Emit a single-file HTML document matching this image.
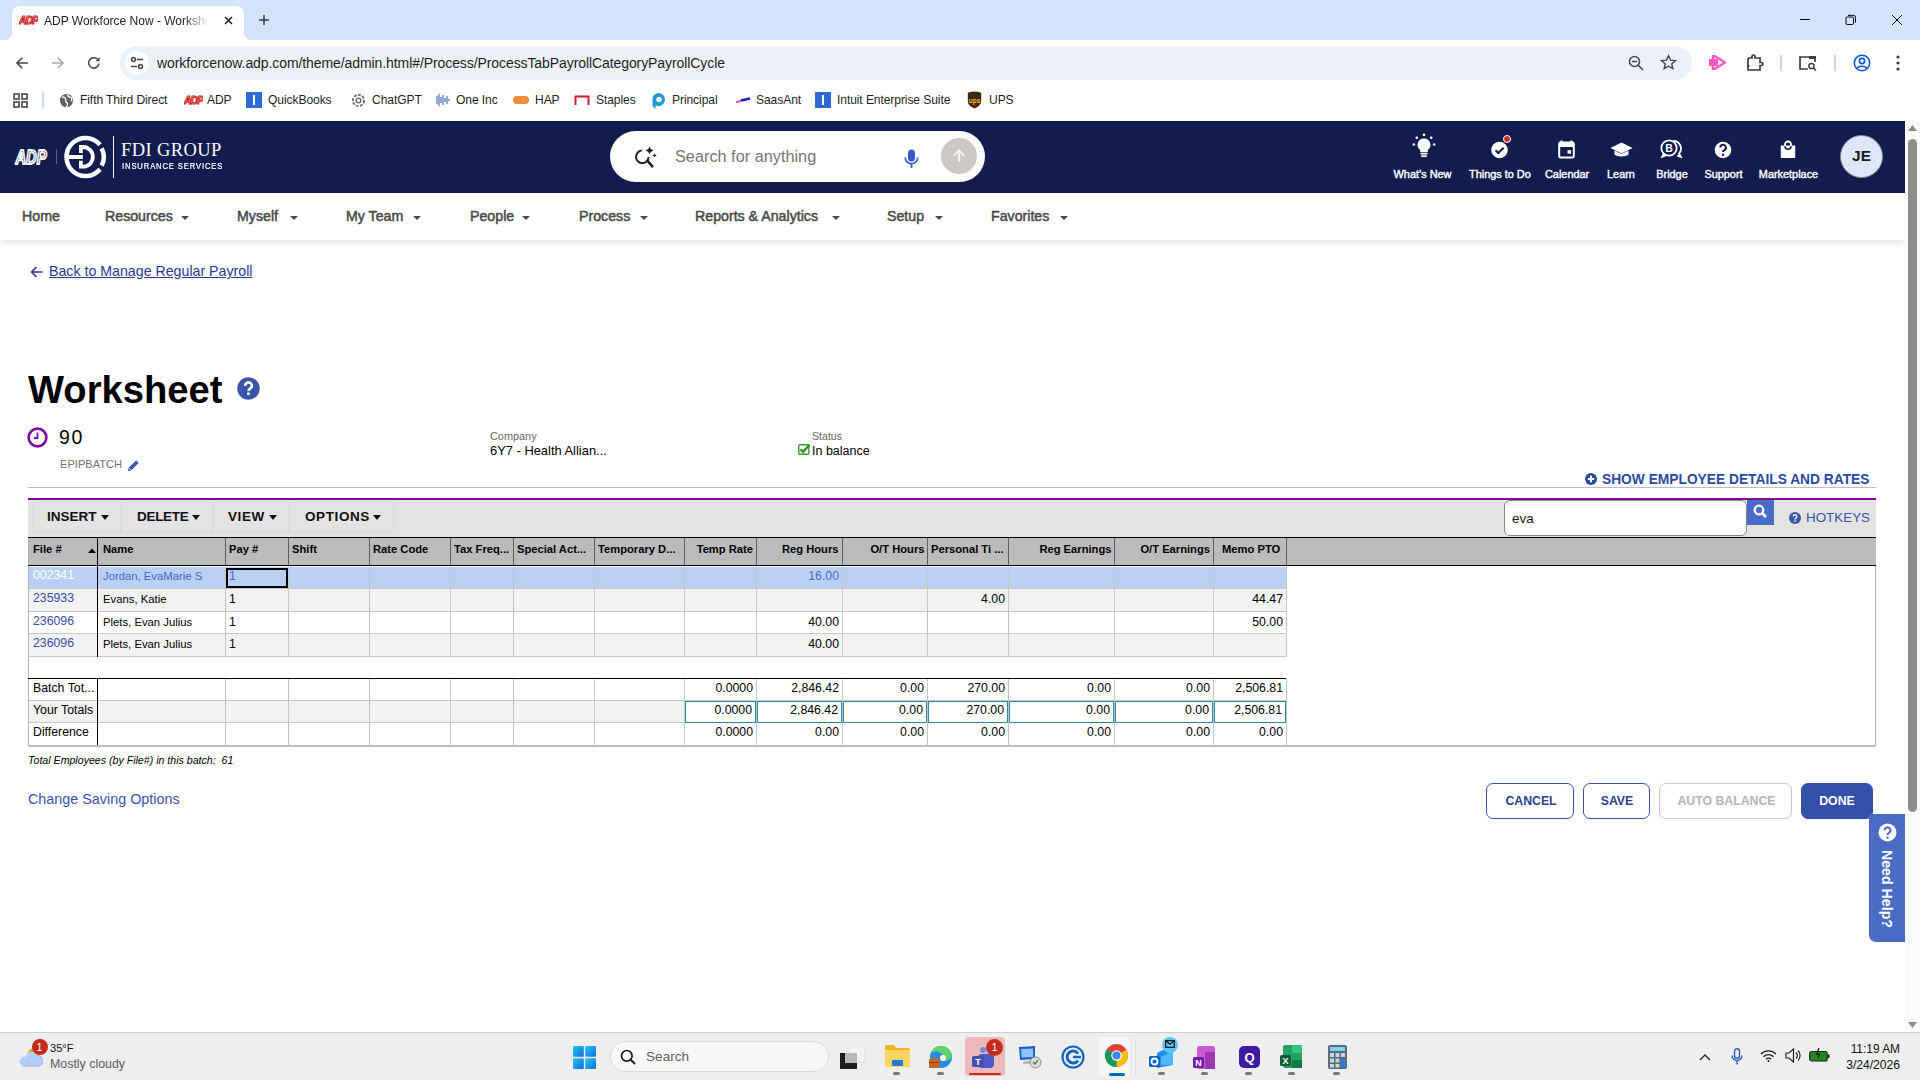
<!DOCTYPE html>
<html><head><meta charset="utf-8">
<style>
*{box-sizing:border-box;margin:0;padding:0}
html,body{width:1920px;height:1080px;overflow:hidden;background:#fff;font-family:"Liberation Sans",sans-serif;color:#000}
.a{position:absolute;white-space:nowrap}
#tabbar{position:absolute;left:0;top:0;width:1920px;height:40px;background:#d3e3fd}
#toolbar{position:absolute;left:0;top:40px;width:1920px;height:45px;background:#fff}
#bmbar{position:absolute;left:0;top:85px;width:1920px;height:36px;background:#fff}
#hdr{position:absolute;left:0;top:121px;width:1905px;height:72px;background:#131c4f}
#nav{position:absolute;left:0;top:193px;width:1905px;height:47px;background:#fff;box-shadow:0 2px 6px rgba(0,0,0,.13)}
#scroll{position:absolute;left:1905px;top:121px;width:15px;height:911px;background:#fafafa}
#task{position:absolute;left:0;top:1032px;width:1920px;height:48px;background:#eeeeee;border-top:1px solid #cfcfcf}
.bm{top:7px;font-size:12.1px;color:#1f1f1f;line-height:16px;letter-spacing:-0.1px}
.hl{top:47px;font-size:10.9px;font-weight:normal;-webkit-text-stroke:0.4px #fff;color:#fff;line-height:13px;text-align:center}
.nv{top:15px;font-size:14.2px;font-weight:normal;-webkit-text-stroke:0.5px #4a4a4a;color:#4a4a4a;line-height:17px}
.car{top:23px;width:0;height:0;border-left:4px solid transparent;border-right:4px solid transparent;border-top:4px solid #4a4a4a}
.tb{top:501px;height:32px;border:1px solid #d5dde0}
.tbt{top:509px;font-size:13.5px;font-weight:bold;color:#111;line-height:16px}
.dcar{top:515px;width:0;height:0;border-left:4.5px solid transparent;border-right:4.5px solid transparent;border-top:5px solid #111}
.th{top:543px;font-size:11.2px;font-weight:bold;color:#000;line-height:13px}
.td{font-size:12.3px;color:#000;line-height:14px}
.nm{font-size:11.3px}
.btn{top:783px;height:36px;border:1.5px solid;border-radius:7px}
.btnt{top:794px;font-size:12.3px;font-weight:bold;line-height:15px;text-align:center}
.dot{top:39px;width:7px;height:3px;border-radius:2px;background:#7a7a7a}
</style></head><body>
<div id="tabbar">
 <div class="a" style="left:12px;top:6px;width:232px;height:34px;background:#fff;border-radius:8px 8px 0 0"></div>
 <div class="a" style="left:4px;top:32px;width:8px;height:8px;background:radial-gradient(circle at 0 0,#d3e3fd 8px,#fff 8.5px)"></div>
 <div class="a" style="left:244px;top:32px;width:8px;height:8px;background:radial-gradient(circle at 100% 0,#d3e3fd 8px,#fff 8.5px)"></div>
 <svg class="a" style="left:19px;top:14px" width="19" height="11" viewBox="0 0 19 11"><text x="9.5" y="9.5" font-size="10.5" font-weight="bold" font-style="italic" fill="none" stroke="#d0271d" stroke-width="1.1" text-anchor="middle" font-family="Liberation Sans" letter-spacing="-1">ADP</text></svg>
 <div class="a" style="left:44px;top:14px;font-size:12px;color:#1f1f1f;letter-spacing:0px;width:165px;overflow:hidden;-webkit-mask-image:linear-gradient(90deg,#000 85%,transparent)">ADP Workforce Now - Worksheet</div>
 <svg class="a" style="left:224px;top:16px" width="9" height="9" viewBox="0 0 9 9"><path d="M1 1L8 8M8 1L1 8" stroke="#1f1f1f" stroke-width="1.5"/></svg>
 <svg class="a" style="left:259px;top:15px" width="10" height="10" viewBox="0 0 10 10"><path d="M5 0V10M0 5H10" stroke="#3c3c3c" stroke-width="1.5"/></svg>
 <div class="a" style="left:1800px;top:19px;width:10px;height:1px;background:#000"></div>
 <svg class="a" style="left:1845px;top:14px" width="12" height="12" viewBox="0 0 12 12"><rect x="1" y="3" width="7.5" height="7.5" rx="1.2" fill="none" stroke="#000" stroke-width="1"/><path d="M3 1.3h5.5a2 2 0 0 1 2 2V8.7" fill="none" stroke="#000" stroke-width="1"/></svg>
 <svg class="a" style="left:1891px;top:14px" width="12" height="12" viewBox="0 0 12 12"><path d="M1 1L11 11M11 1L1 11" stroke="#000" stroke-width="1"/></svg>
</div>
<div id="toolbar">
 <svg class="a" style="left:15px;top:16px" width="14" height="14" viewBox="0 0 14 14"><path d="M13 7H2.2M7.2 1.8L2 7L7.2 12.2" fill="none" stroke="#474747" stroke-width="1.6"/></svg>
 <svg class="a" style="left:51px;top:16px" width="14" height="14" viewBox="0 0 14 14"><path d="M1 7H11.8M6.8 1.8L12 7L6.8 12.2" fill="none" stroke="#a8a8a8" stroke-width="1.6"/></svg>
 <svg class="a" style="left:87px;top:16px" width="14" height="14" viewBox="0 0 14 14"><path d="M12 7.5a5.2 5.2 0 1 1-1.5-4.3" fill="none" stroke="#474747" stroke-width="1.6"/><path d="M12.6 1V5.2H8.4z" fill="#474747"/></svg>
 <div class="a" style="left:120px;top:6px;width:1572px;height:34px;border-radius:17px;background:#ecf1f9"></div>
 <div class="a" style="left:125px;top:11px;width:24px;height:24px;border-radius:12px;background:#fff"></div>
 <svg class="a" style="left:130px;top:16px" width="14" height="14" viewBox="0 0 14 14"><circle cx="3.5" cy="3.5" r="2" fill="none" stroke="#474747" stroke-width="1.5"/><path d="M7 3.5H13" stroke="#474747" stroke-width="1.5"/><circle cx="10.5" cy="10.5" r="2" fill="none" stroke="#474747" stroke-width="1.5"/><path d="M1 10.5H7" stroke="#474747" stroke-width="1.5"/></svg>
 <div class="a" style="left:157px;top:15px;font-size:14px;letter-spacing:-0.085px;color:#1f1f1f;line-height:16px">workforcenow.adp.com/theme/admin.html#/Process/ProcessTabPayrollCategoryPayrollCycle</div>
 <svg class="a" style="left:1628px;top:15px" width="16" height="16" viewBox="0 0 16 16"><circle cx="6.5" cy="6.5" r="5" fill="none" stroke="#474747" stroke-width="1.6"/><path d="M10 10L15 15M4 6.5H9" stroke="#474747" stroke-width="1.6"/></svg>
 <svg class="a" style="left:1660px;top:14px" width="17" height="17" viewBox="0 0 24 24"><path d="M12 2.5l2.9 6.2 6.8.7-5.1 4.6 1.5 6.7L12 17.3l-6.1 3.4 1.5-6.7L2.3 9.4l6.8-.7z" fill="none" stroke="#474747" stroke-width="2"/></svg>
 <svg class="a" style="left:1709px;top:15px" width="17" height="15" viewBox="0 0 17 15"><path d="M0 4H4V11H0z" fill="#ff5bbd"/><path d="M4 0L16 7.5L4 15z" fill="none" stroke="#ff5bbd" stroke-width="2.5"/><path d="M4 4H9V11H4z" fill="#ff5bbd"/></svg>
 <svg class="a" style="left:1746px;top:14px" width="18" height="18" viewBox="0 0 18 18"><path d="M2 4H6V2.5a1.5 1.5 0 0 1 3 0V4H14V8.5h1.5a1.5 1.5 0 0 1 0 3H14V16H2V12h1.5" fill="none" stroke="#3c3c3c" stroke-width="1.7"/><path d="M2 4V12" stroke="#3c3c3c" stroke-width="1.7"/></svg>
 <div class="a" style="left:1780px;top:15px;width:2px;height:16px;background:#c2d5f5"></div>
 <svg class="a" style="left:1799px;top:15px" width="18" height="16" viewBox="0 0 18 16"><path d="M9 14H1V2H16V7" fill="none" stroke="#3c3c3c" stroke-width="1.7"/><rect x="10" y="1" width="7" height="3" fill="#3c3c3c"/><circle cx="12.5" cy="11" r="2.6" fill="none" stroke="#3c3c3c" stroke-width="1.5"/><path d="M14.5 13L17 15.5" stroke="#3c3c3c" stroke-width="1.6"/></svg>
 <div class="a" style="left:1834px;top:15px;width:2px;height:16px;background:#c2d5f5"></div>
 <svg class="a" style="left:1853px;top:14px" width="18" height="18" viewBox="0 0 18 18"><circle cx="9" cy="9" r="7.7" fill="none" stroke="#0b57d0" stroke-width="1.6"/><circle cx="9" cy="7" r="2.6" fill="none" stroke="#0b57d0" stroke-width="1.6"/><path d="M4 14a6 4 0 0 1 10 0" fill="none" stroke="#0b57d0" stroke-width="1.6"/></svg>
 <svg class="a" style="left:1895px;top:15px" width="6" height="16" viewBox="0 0 6 16"><circle cx="3" cy="2" r="1.6" fill="#3c3c3c"/><circle cx="3" cy="8" r="1.6" fill="#3c3c3c"/><circle cx="3" cy="14" r="1.6" fill="#3c3c3c"/></svg>
</div>

<div id="bmbar">
 <svg class="a" style="left:13px;top:8px" width="15" height="15" viewBox="0 0 15 15"><g fill="none" stroke="#474747" stroke-width="1.6"><rect x="1" y="1" width="5" height="5"/><rect x="9" y="1" width="5" height="5"/><rect x="1" y="9" width="5" height="5"/><rect x="9" y="9" width="5" height="5"/></g></svg>
 <div class="a" style="left:42px;top:7px;width:2px;height:16px;background:#c7d9f7"></div>
 <svg class="a" style="left:59px;top:8px" width="15" height="15" viewBox="0 0 16 16"><circle cx="8" cy="8" r="7" fill="#5f6368"/><path d="M3 4c2 1 3 0 4 2s-1 3 1 4 1 3 0 5M9 1.5c0 2 1 2.5 3 3s2 2 1 4" fill="none" stroke="#fff" stroke-width="1.4"/></svg>
 <div class="a bm" style="left:80px">Fifth Third Direct</div>
 <svg class="a" style="left:184px;top:9px" width="19" height="11" viewBox="0 0 19 11"><text x="9.5" y="9.5" font-size="10.5" font-weight="bold" font-style="italic" fill="none" stroke="#d0271d" stroke-width="1.1" text-anchor="middle" font-family="Liberation Sans" letter-spacing="-1">ADP</text></svg>
 <div class="a bm" style="left:207px">ADP</div>
 <div class="a" style="left:246px;top:7px;width:16px;height:16px;background:#2e6ad6"><div style="position:absolute;left:7px;top:3px;width:2px;height:10px;background:#fff"></div></div>
 <div class="a bm" style="left:268px">QuickBooks</div>
 <svg class="a" style="left:351px;top:8px" width="15" height="15" viewBox="0 0 16 16"><circle cx="8" cy="8" r="6" fill="none" stroke="#6b6b6b" stroke-width="2" stroke-dasharray="3 1.5"/><circle cx="8" cy="8" r="2.5" fill="none" stroke="#6b6b6b" stroke-width="1.5"/></svg>
 <div class="a bm" style="left:372px">ChatGPT</div>
 <svg class="a" style="left:434px;top:7px" width="16" height="16" viewBox="0 0 16 16"><g stroke="#5b7fb8" stroke-width="1.3"><path d="M1 8V8M3 4V12M5 2V14M7 5V11M9 3V13M11 6V10M13 4V12M15 7V9"/></g></svg>
 <div class="a bm" style="left:456px">One Inc</div>
 <div class="a" style="left:513px;top:11px;width:16px;height:8px;border-radius:4px;background:#f08a3c"></div>
 <div class="a bm" style="left:535px">HAP</div>
 <svg class="a" style="left:574px;top:10px" width="16" height="10" viewBox="0 0 16 10"><path d="M1.5 10V1.5H14.5V10" fill="none" stroke="#cc1f2f" stroke-width="2"/></svg>
 <div class="a bm" style="left:596px">Staples</div>
 <svg class="a" style="left:651px;top:7px" width="15" height="17" viewBox="0 0 15 17"><path d="M7.5 1a6.5 6.5 0 1 1-3 12.3V17L1.5 14V7.5A6 6 0 0 1 7.5 1z" fill="#1a9ad6"/><circle cx="8" cy="7.5" r="2.7" fill="#fff"/></svg>
 <div class="a bm" style="left:672px">Principal</div>
 <svg class="a" style="left:735px;top:9px" width="16" height="12" viewBox="0 0 16 12"><path d="M1 8L6 7" stroke="#ff3fb4" stroke-width="2"/><path d="M6 6.5L15 4.5" stroke="#1b1bd6" stroke-width="2.6"/></svg>
 <div class="a bm" style="left:756px">SaasAnt</div>
 <div class="a" style="left:815px;top:7px;width:16px;height:16px;background:#2e6ad6"><div style="position:absolute;left:7px;top:3px;width:2px;height:10px;background:#fff"></div></div>
 <div class="a bm" style="left:837px">Intuit Enterprise Suite</div>
 <svg class="a" style="left:967px;top:6px" width="15" height="18" viewBox="0 0 15 18"><path d="M7.5 0.5C4 0.5 1.5 1.3 0.8 2V10c0 4 4 6.5 6.7 7.5 2.7-1 6.7-3.5 6.7-7.5V2C13.5 1.3 11 0.5 7.5 0.5z" fill="#3b2a18"/><text x="7.5" y="11.5" font-size="6.5" font-weight="bold" fill="#f5b400" text-anchor="middle" font-family="Liberation Sans">ups</text></svg>
 <div class="a bm" style="left:989px">UPS</div>
</div>

<div id="hdr">
 <svg class="a" style="left:14px;top:27px" width="36" height="18" viewBox="0 0 36 18"><text x="1.5" y="16" font-size="20" font-weight="bold" font-style="italic" fill="#131c4f" stroke="#fff" stroke-width="1.9" stroke-linejoin="round" textLength="31" lengthAdjust="spacingAndGlyphs" font-family="Liberation Sans">ADP</text></svg>
 <div class="a" style="left:56px;top:28px;width:1px;height:15px;background:#5a6090"></div>
 <svg class="a" style="left:64px;top:14px" width="44" height="45" viewBox="0 0 44 45"><path d="M36.05 9.79A19 19 0 1 0 36.05 34.21" fill="none" stroke="#fff" stroke-width="4.5"/><path d="M37.61 13.43A18.25 18.25 0 0 1 37.61 30.57" fill="none" stroke="#fff" stroke-width="4.5"/><path d="M16.9 17.9V12H19A9.85 9.85 0 0 1 19 31.7H16.9V25.8" fill="none" stroke="#fff" stroke-width="3.8"/><path d="M4 22H18.8" stroke="#fff" stroke-width="4"/></svg>
 <div class="a" style="left:113px;top:15px;width:1px;height:42px;background:#fff"></div>
 <div class="a" style="left:121px;top:19px;font-family:'Liberation Serif',serif;font-size:18.5px;color:#fff;line-height:20px;letter-spacing:0.4px">FDI GROUP</div>
 <div class="a" style="left:122px;top:40px;font-size:7.6px;color:#fff;line-height:9px;letter-spacing:0.9px;font-weight:normal;-webkit-text-stroke:0.2px #fff;transform:scaleY(1.15);transform-origin:0 0">INSURANCE SERVICES</div>
 <div class="a" style="left:610px;top:10px;width:375px;height:51px;border-radius:26px;background:#fff"></div>
 <svg class="a" style="left:634px;top:23px" width="24" height="24" viewBox="0 0 24 24"><path d="M7.75 6.62A6.3 6.3 0 1 0 14.6 12.9" fill="none" stroke="#222" stroke-width="2"/><path d="M13.4 16.6L18.3 22.4" stroke="#222" stroke-width="2.5" stroke-linecap="round"/><path d="M15.6 2.1Q16.2 5.8 19.9 6.4Q16.2 7 15.6 10.7Q15 7 11.3 6.4Q15 5.8 15.6 2.1Z" fill="#222"/><path d="M20.6 9.3Q20.9 11.1 22.7 11.4Q20.9 11.7 20.6 13.5Q20.3 11.7 18.5 11.4Q20.3 11.1 20.6 9.3Z" fill="#222"/></svg>
 <div class="a" style="left:675px;top:25px;font-size:16.3px;color:#767676;line-height:20px">Search for anything</div>
 <svg class="a" style="left:904px;top:28px" width="15" height="19" viewBox="0 0 15 19"><rect x="4" y="0.5" width="7" height="12" rx="3.5" fill="#3a58c0"/><path d="M1.3 8.5a6.2 6.2 0 0 0 12.4 0" fill="none" stroke="#3a58c0" stroke-width="1.8"/><path d="M7.5 14.5V19" stroke="#3a58c0" stroke-width="1.8"/></svg>
 <div class="a" style="left:941px;top:17px;width:36px;height:36px;border-radius:18px;background:#cdc8c4"></div>
 <svg class="a" style="left:952px;top:28px" width="14" height="14" viewBox="0 0 14 14"><path d="M7 13V1.5M1.8 6.7L7 1.5L12.2 6.7" fill="none" stroke="#fff" stroke-width="1.6"/></svg>
 <!-- right icons -->
 <svg class="a" style="left:1412px;top:12px" width="24" height="25" viewBox="0 0 24 25"><g fill="#fff"><circle cx="12" cy="1.8" r="1.4"/><circle cx="4.8" cy="4.8" r="1.3"/><circle cx="19.2" cy="4.8" r="1.3"/><circle cx="1.8" cy="11.5" r="1.3"/><circle cx="22.2" cy="11.5" r="1.3"/><path d="M12 5.5a6.3 6.3 0 0 0-3.8 11.4V19h7.6v-2.1A6.3 6.3 0 0 0 12 5.5z"/><rect x="8.4" y="19.8" width="7.2" height="1.6" rx=".5"/><rect x="9" y="22.2" width="6" height="1.8" rx=".8"/></g></svg>
 <div class="a hl" style="left:1393px;width:59px">What’s New</div>
 <svg class="a" style="left:1490px;top:19px" width="20" height="19" viewBox="0 0 20 19"><circle cx="9.5" cy="10" r="8.3" fill="#fff"/><path d="M5.5 10.2l2.8 2.8 5.3-5.3" fill="none" stroke="#131c4f" stroke-width="2"/></svg>
 <div class="a" style="left:1503px;top:14px;width:8px;height:8px;border-radius:4px;background:#d0271d;border:1px solid #fff"></div>
 <div class="a hl" style="left:1469px;width:61px">Things to Do</div>
 <svg class="a" style="left:1558px;top:19px" width="17" height="19" viewBox="0 0 17 19"><path d="M3.5 0.5V3M13.5 0.5V3" stroke="#fff" stroke-width="2"/><rect x="1.2" y="2.5" width="14.6" height="15" rx="1.3" fill="none" stroke="#fff" stroke-width="2"/><rect x="1.2" y="2.5" width="14.6" height="4.5" fill="#fff"/><rect x="9.5" y="10.2" width="3.5" height="3.5" fill="#fff"/></svg>
 <div class="a hl" style="left:1545px;width:44px">Calendar</div>
 <svg class="a" style="left:1610px;top:21px" width="23" height="16" viewBox="0 0 23 16"><path d="M11.5 0.5L22.5 6L11.5 11.5L0.5 6z" fill="#fff"/><path d="M4.5 8.5V12.5c2 2.5 12 2.5 14 0V8.5L11.5 12z" fill="#fff"/></svg>
 <div class="a hl" style="left:1606px;width:30px">Learn</div>
 <svg class="a" style="left:1660px;top:18px" width="23" height="19" viewBox="0 0 23 19"><path d="M13 2a7.5 7.5 0 0 1 6 12.5l2 3.5-4-1.5" fill="none" stroke="#fff" stroke-width="1.8"/><circle cx="9" cy="9" r="7.7" fill="#131c4f" stroke="#fff" stroke-width="1.8"/><path d="M3.5 14.5L1.5 18.5 6 16.5" fill="#fff" stroke="#fff" stroke-width="1.2"/><text x="9" y="12.8" font-size="10.5" font-weight="bold" fill="#fff" text-anchor="middle" font-family="Liberation Sans">B</text></svg>
 <div class="a hl" style="left:1656px;width:32px">Bridge</div>
 <svg class="a" style="left:1714px;top:20px" width="18" height="18" viewBox="0 0 18 18"><circle cx="9" cy="9" r="8.3" fill="#fff"/><path d="M6.3 6.6a2.8 2.8 0 1 1 4 2.5c-.9.5-1.3 1-1.3 2" fill="none" stroke="#131c4f" stroke-width="2"/><circle cx="9" cy="13.8" r="1.2" fill="#131c4f"/></svg>
 <div class="a hl" style="left:1704px;width:39px">Support</div>
 <svg class="a" style="left:1780px;top:19px" width="16" height="19" viewBox="0 0 16 19"><path d="M5 6V4.5a3 3 0 0 1 6 0V6" fill="none" stroke="#fff" stroke-width="1.8"/><path d="M0.8 5.5h14.4v12.5H0.8z" fill="#fff"/><path d="M5 6.2a3 3 0 0 0 6 0" fill="none" stroke="#131c4f" stroke-width="1.6"/></svg>
 <div class="a hl" style="left:1758px;width:61px">Marketplace</div>
 <div class="a" style="left:1840px;top:14px;width:43px;height:43px;border-radius:22px;background:#dde7f8;border:1px solid #8d8a88"></div>
 <div class="a" style="left:1840px;top:25px;width:43px;text-align:center;font-size:15.5px;font-weight:bold;color:#1b1b1b;line-height:20px">JE</div>
</div>
<div id="nav">
 <div class="a nv" style="left:22px">Home</div>
 <div class="a nv" style="left:105px">Resources</div><div class="a car" style="left:181px"></div>
 <div class="a nv" style="left:237px">Myself</div><div class="a car" style="left:290px"></div>
 <div class="a nv" style="left:346px">My Team</div><div class="a car" style="left:413px"></div>
 <div class="a nv" style="left:470px">People</div><div class="a car" style="left:522px"></div>
 <div class="a nv" style="left:579px">Process</div><div class="a car" style="left:640px"></div>
 <div class="a nv" style="left:695px">Reports &amp; Analytics</div><div class="a car" style="left:832px"></div>
 <div class="a nv" style="left:887px">Setup</div><div class="a car" style="left:935px"></div>
 <div class="a nv" style="left:991px">Favorites</div><div class="a car" style="left:1060px"></div>
</div>

<svg class="a" style="left:30px;top:266px" width="13" height="12" viewBox="0 0 13 12"><path d="M12.5 6H1.5M6.5 1L1.5 6L6.5 11" fill="none" stroke="#2b3a8f" stroke-width="1.6"/></svg>
<div class="a" style="left:49px;top:263px;font-size:14.2px;color:#2b3a8f;text-decoration:underline;text-underline-offset:1px;line-height:16px">Back to Manage Regular Payroll</div>
<div class="a" style="left:28px;top:368px;font-size:38.2px;font-weight:bold;color:#000;line-height:44px">Worksheet</div>
<svg class="a" style="left:237px;top:377px" width="23" height="23" viewBox="0 0 23 23"><circle cx="11.5" cy="11.5" r="11.2" fill="#3a54a8"/><path d="M8.2 8.8a3.3 3.3 0 1 1 4.8 2.9c-1 .55-1.5 1.1-1.5 2.4" fill="none" stroke="#fff" stroke-width="2.5"/><rect x="10.2" y="15.5" width="2.6" height="2.6" fill="#fff"/></svg>
<svg class="a" style="left:27px;top:427px" width="21" height="21" viewBox="0 0 21 21"><circle cx="10.5" cy="10.5" r="8.9" fill="none" stroke="#7d0ba0" stroke-width="2.6"/><path d="M10.5 5.5V11H7" fill="none" stroke="#7d0ba0" stroke-width="1.8"/></svg>
<div class="a" style="left:59px;top:426px;font-size:19.5px;color:#000;line-height:22px;letter-spacing:1.6px">90</div>
<div class="a" style="left:60px;top:458px;font-size:11.1px;color:#707070;line-height:13px">EPIPBATCH</div>
<svg class="a" style="left:127px;top:459px" width="13" height="13" viewBox="0 0 13 13"><path d="M1 12l.6-3.2L9 1.4l2.6 2.6-7.4 7.4z" fill="#3a54b8"/><path d="M2.2 9.3l1.5 1.5" stroke="#fff" stroke-width="0.8"/></svg>
<div class="a" style="left:490px;top:430px;font-size:10.9px;color:#666;line-height:12px">Company</div>
<div class="a" style="left:490px;top:443px;font-size:12.9px;color:#000;line-height:15px">6Y7 - Health Allian...</div>
<div class="a" style="left:812px;top:430px;font-size:10.6px;color:#666;line-height:12px">Status</div>
<svg class="a" style="left:798px;top:444px" width="12" height="11" viewBox="0 0 12 11"><rect x="0.8" y="0.8" width="10" height="9.5" rx="1" fill="none" stroke="#3f9a2f" stroke-width="1.4"/><path d="M2.5 5.2l2.5 2.7L11.5 0.8" fill="none" stroke="#2f8a1f" stroke-width="2.2"/></svg>
<div class="a" style="left:812px;top:444px;font-size:12.5px;color:#000;line-height:15px">In balance</div>
<svg class="a" style="left:1585px;top:473px" width="12" height="12" viewBox="0 0 12 12"><circle cx="6" cy="6" r="6" fill="#2b4aa0"/><path d="M6 2.8V9.2M2.8 6H9.2" stroke="#fff" stroke-width="2"/></svg>
<div class="a" style="left:1602px;top:472px;font-size:13.78px;font-weight:bold;color:#2b4aa0;line-height:16px">SHOW EMPLOYEE DETAILS AND RATES</div>
<div class="a" style="left:28px;top:487px;width:1848px;height:1px;background:#bdbdbd"></div>
<div class="a" style="left:28px;top:498px;width:1848px;height:2px;background:#7e0aa0"></div>
<div class="a" style="left:28px;top:500px;width:1848px;height:37px;background:#e3e3e3"></div>
<div class="a tb" style="left:32px;width:89px"></div>
<div class="a tb" style="left:121px;width:92px"></div>
<div class="a tb" style="left:213px;width:76px"></div>
<div class="a tb" style="left:289px;width:105px"></div>
<div class="a tbt" style="left:47px">INSERT</div><div class="a dcar" style="left:101px"></div>
<div class="a tbt" style="left:137px;letter-spacing:-0.3px">DELETE</div><div class="a dcar" style="left:192px"></div>
<div class="a tbt" style="left:228px;letter-spacing:0.6px">VIEW</div><div class="a dcar" style="left:269px"></div>
<div class="a tbt" style="left:305px;letter-spacing:0.6px">OPTIONS</div><div class="a dcar" style="left:373px"></div>
<div class="a" style="left:1504px;top:500px;width:243px;height:36px;border:1px solid #8a8580;border-radius:6px;background:#fff"></div>
<div class="a" style="left:1512px;top:511px;font-size:13.5px;color:#1b1b1b;line-height:16px">eva</div>
<div class="a" style="left:1747px;top:500px;width:27px;height:25px;background:#4a6cc8"></div>
<svg class="a" style="left:1753px;top:504px" width="15" height="15" viewBox="0 0 15 15"><circle cx="6" cy="6" r="4.3" fill="none" stroke="#fff" stroke-width="2.2"/><path d="M9 9L13 13" stroke="#fff" stroke-width="2.6"/></svg>
<svg class="a" style="left:1789px;top:512px" width="12" height="12" viewBox="0 0 12 12"><circle cx="6" cy="6" r="6" fill="#3a54a8"/><path d="M4.2 4.6a1.8 1.8 0 1 1 2.6 1.6c-.5.3-.8.6-.8 1.3" fill="none" stroke="#fff" stroke-width="1.4"/><rect x="5.3" y="8.3" width="1.5" height="1.5" fill="#fff"/></svg>
<div class="a" style="left:1806px;top:510px;font-size:13.4px;color:#3a54a8;line-height:16px">HOTKEYS</div>

<div class="a" style="left:28px;top:537px;width:1848px;height:210px;border-left:1px solid #b4b4b4;border-right:1px solid #b4b4b4"></div>
<div class="a" style="left:28px;top:537px;width:1848px;height:1px;background:#000"></div>
<div class="a" style="left:29px;top:538px;width:1847px;height:27px;background:#bbbbbb"></div>
<div class="a" style="left:28px;top:565px;width:1848px;height:1px;background:#000"></div>
<div class="a" style="left:225px;top:538px;width:1px;height:27px;background:#5e5e5e"></div>
<div class="a" style="left:288px;top:538px;width:1px;height:27px;background:#5e5e5e"></div>
<div class="a" style="left:369px;top:538px;width:1px;height:27px;background:#5e5e5e"></div>
<div class="a" style="left:450px;top:538px;width:1px;height:27px;background:#5e5e5e"></div>
<div class="a" style="left:513px;top:538px;width:1px;height:27px;background:#5e5e5e"></div>
<div class="a" style="left:594px;top:538px;width:1px;height:27px;background:#5e5e5e"></div>
<div class="a" style="left:684px;top:538px;width:1px;height:27px;background:#5e5e5e"></div>
<div class="a" style="left:756px;top:538px;width:1px;height:27px;background:#5e5e5e"></div>
<div class="a" style="left:842px;top:538px;width:1px;height:27px;background:#5e5e5e"></div>
<div class="a" style="left:927px;top:538px;width:1px;height:27px;background:#5e5e5e"></div>
<div class="a" style="left:1008px;top:538px;width:1px;height:27px;background:#5e5e5e"></div>
<div class="a" style="left:1114px;top:538px;width:1px;height:27px;background:#5e5e5e"></div>
<div class="a" style="left:1213px;top:538px;width:1px;height:27px;background:#5e5e5e"></div>
<div class="a" style="left:1286px;top:538px;width:1px;height:27px;background:#5e5e5e"></div>
<div class="a" style="left:97px;top:538px;width:1px;height:27px;background:#000"></div>
<div class="a th" style="left:33px">File #</div>
<div class="a th" style="left:103px">Name</div>
<div class="a th" style="left:229px">Pay #</div>
<div class="a th" style="left:292px">Shift</div>
<div class="a th" style="left:373px">Rate Code</div>
<div class="a th" style="left:454px">Tax Freq...</div>
<div class="a th" style="left:517px">Special Act...</div>
<div class="a th" style="left:598px">Temporary D...</div>
<div class="a th" style="left:553px;width:200px;text-align:right">Temp Rate</div>
<div class="a th" style="left:638.5px;width:200px;text-align:right">Reg Hours</div>
<div class="a th" style="left:724.5px;width:200px;text-align:right">O/T Hours</div>
<div class="a th" style="left:931px">Personal Ti ...</div>
<div class="a th" style="left:911.5px;width:200px;text-align:right">Reg Earnings</div>
<div class="a th" style="left:1010px;width:200px;text-align:right">O/T Earnings</div>
<div class="a th" style="left:1222px">Memo PTO</div>
<svg class="a" style="left:88px;top:548px" width="8" height="5" viewBox="0 0 8 5"><path d="M0 5L4 0.5L8 5z" fill="#000"/></svg>
<div class="a" style="left:29px;top:567px;width:1257px;height:21px;background:#bacff4"></div>
<div class="a" style="left:29px;top:588px;width:1258px;height:1px;background:#c6c6c6"></div>
<div class="a" style="left:29px;top:589px;width:1257px;height:22px;background:#f2f2f2"></div>
<div class="a" style="left:29px;top:611px;width:1258px;height:1px;background:#c6c6c6"></div>
<div class="a" style="left:29px;top:612px;width:1257px;height:21px;background:#ffffff"></div>
<div class="a" style="left:29px;top:633px;width:1258px;height:1px;background:#c6c6c6"></div>
<div class="a" style="left:29px;top:634px;width:1257px;height:22px;background:#f2f2f2"></div>
<div class="a" style="left:29px;top:656px;width:1258px;height:1px;background:#c6c6c6"></div>
<div class="a" style="left:225px;top:566px;width:1px;height:91px;background:#c6c6c6"></div>
<div class="a" style="left:288px;top:566px;width:1px;height:91px;background:#c6c6c6"></div>
<div class="a" style="left:369px;top:566px;width:1px;height:91px;background:#c6c6c6"></div>
<div class="a" style="left:450px;top:566px;width:1px;height:91px;background:#c6c6c6"></div>
<div class="a" style="left:513px;top:566px;width:1px;height:91px;background:#c6c6c6"></div>
<div class="a" style="left:594px;top:566px;width:1px;height:91px;background:#c6c6c6"></div>
<div class="a" style="left:684px;top:566px;width:1px;height:91px;background:#c6c6c6"></div>
<div class="a" style="left:756px;top:566px;width:1px;height:91px;background:#c6c6c6"></div>
<div class="a" style="left:842px;top:566px;width:1px;height:91px;background:#c6c6c6"></div>
<div class="a" style="left:927px;top:566px;width:1px;height:91px;background:#c6c6c6"></div>
<div class="a" style="left:1008px;top:566px;width:1px;height:91px;background:#c6c6c6"></div>
<div class="a" style="left:1114px;top:566px;width:1px;height:91px;background:#c6c6c6"></div>
<div class="a" style="left:1213px;top:566px;width:1px;height:91px;background:#c6c6c6"></div>
<div class="a" style="left:1286px;top:566px;width:1px;height:91px;background:#c6c6c6"></div>
<div class="a" style="left:97px;top:566px;width:1px;height:91px;background:#000"></div>
<div class="a" style="left:96.5px;top:566px;width:1px;height:91px;background:rgba(0,0,0,.35)"></div>
<div class="a" style="left:96.5px;top:538px;width:1px;height:27px;background:rgba(0,0,0,.35)"></div>
<div class="a td" style="left:33px;top:568px;color:#ffffff">002341</div>
<div class="a td nm" style="left:103px;top:569px;color:#4a66c4">Jordan, EvaMarie S</div>
<div class="a td" style="left:229px;top:569px;color:#4a66c4">1</div>
<div class="a td" style="left:739px;width:100px;text-align:right;top:569px;color:#4a66c4">16.00</div>
<div class="a td" style="left:33px;top:591px;color:#3a4ea6">235933</div>
<div class="a td nm" style="left:103px;top:592px;color:#000">Evans, Katie</div>
<div class="a td" style="left:229px;top:592px;color:#000">1</div>
<div class="a td" style="left:905px;width:100px;text-align:right;top:592px;color:#000">4.00</div>
<div class="a td" style="left:1183px;width:100px;text-align:right;top:592px;color:#000">44.47</div>
<div class="a td" style="left:33px;top:614px;color:#3a4ea6">236096</div>
<div class="a td nm" style="left:103px;top:615px;color:#000">Plets, Evan Julius</div>
<div class="a td" style="left:229px;top:615px;color:#000">1</div>
<div class="a td" style="left:739px;width:100px;text-align:right;top:615px;color:#000">40.00</div>
<div class="a td" style="left:1183px;width:100px;text-align:right;top:615px;color:#000">50.00</div>
<div class="a td" style="left:33px;top:636px;color:#3a4ea6">236096</div>
<div class="a td nm" style="left:103px;top:637px;color:#000">Plets, Evan Julius</div>
<div class="a td" style="left:229px;top:637px;color:#000">1</div>
<div class="a td" style="left:739px;width:100px;text-align:right;top:637px;color:#000">40.00</div>
<div class="a" style="left:226px;top:568px;width:62px;height:20px;border:2px solid #000"></div>
<div class="a" style="left:28px;top:678px;width:1258px;height:1px;background:#000"></div>
<div class="a" style="left:29px;top:679px;width:1257px;height:21px;background:#fff"></div>
<div class="a" style="left:29px;top:700px;width:1258px;height:1px;background:#c6c6c6"></div>
<div class="a" style="left:29px;top:701px;width:1257px;height:21px;background:#f2f2f2"></div>
<div class="a" style="left:29px;top:722px;width:1258px;height:1px;background:#c6c6c6"></div>
<div class="a" style="left:29px;top:723px;width:1257px;height:22px;background:#fff"></div>
<div class="a" style="left:28px;top:745px;width:1848px;height:2px;background:#bdbdbd"></div>
<div class="a" style="left:225px;top:679px;width:1px;height:66px;background:#c6c6c6"></div>
<div class="a" style="left:288px;top:679px;width:1px;height:66px;background:#c6c6c6"></div>
<div class="a" style="left:369px;top:679px;width:1px;height:66px;background:#c6c6c6"></div>
<div class="a" style="left:450px;top:679px;width:1px;height:66px;background:#c6c6c6"></div>
<div class="a" style="left:513px;top:679px;width:1px;height:66px;background:#c6c6c6"></div>
<div class="a" style="left:594px;top:679px;width:1px;height:66px;background:#c6c6c6"></div>
<div class="a" style="left:684px;top:679px;width:1px;height:66px;background:#c6c6c6"></div>
<div class="a" style="left:756px;top:679px;width:1px;height:66px;background:#c6c6c6"></div>
<div class="a" style="left:842px;top:679px;width:1px;height:66px;background:#c6c6c6"></div>
<div class="a" style="left:927px;top:679px;width:1px;height:66px;background:#c6c6c6"></div>
<div class="a" style="left:1008px;top:679px;width:1px;height:66px;background:#c6c6c6"></div>
<div class="a" style="left:1114px;top:679px;width:1px;height:66px;background:#c6c6c6"></div>
<div class="a" style="left:1213px;top:679px;width:1px;height:66px;background:#c6c6c6"></div>
<div class="a" style="left:1286px;top:679px;width:1px;height:66px;background:#c6c6c6"></div>
<div class="a" style="left:97px;top:679px;width:1px;height:66px;background:#000"></div>
<div class="a" style="left:96.5px;top:679px;width:1px;height:66px;background:rgba(0,0,0,.35)"></div>
<div class="a td" style="left:33px;top:681px">Batch Tot...</div>
<div class="a td" style="left:653px;width:100px;text-align:right;top:681px">0.0000</div>
<div class="a td" style="left:739px;width:100px;text-align:right;top:681px">2,846.42</div>
<div class="a td" style="left:824px;width:100px;text-align:right;top:681px">0.00</div>
<div class="a td" style="left:905px;width:100px;text-align:right;top:681px">270.00</div>
<div class="a td" style="left:1011px;width:100px;text-align:right;top:681px">0.00</div>
<div class="a td" style="left:1110px;width:100px;text-align:right;top:681px">0.00</div>
<div class="a td" style="left:1183px;width:100px;text-align:right;top:681px">2,506.81</div>
<div class="a td" style="left:33px;top:703px">Your Totals</div>
<div class="a" style="left:685px;top:701px;width:71px;height:22px;border:1.5px solid #2f87a3;background:#fff"></div>
<div class="a td" style="left:652px;width:100px;text-align:right;top:703px">0.0000</div>
<div class="a" style="left:757px;top:701px;width:85px;height:22px;border:1.5px solid #2f87a3;background:#fff"></div>
<div class="a td" style="left:738px;width:100px;text-align:right;top:703px">2,846.42</div>
<div class="a" style="left:843px;top:701px;width:84px;height:22px;border:1.5px solid #2f87a3;background:#fff"></div>
<div class="a td" style="left:823px;width:100px;text-align:right;top:703px">0.00</div>
<div class="a" style="left:928px;top:701px;width:80px;height:22px;border:1.5px solid #2f87a3;background:#fff"></div>
<div class="a td" style="left:904px;width:100px;text-align:right;top:703px">270.00</div>
<div class="a" style="left:1009px;top:701px;width:105px;height:22px;border:1.5px solid #2f87a3;background:#fff"></div>
<div class="a td" style="left:1010px;width:100px;text-align:right;top:703px">0.00</div>
<div class="a" style="left:1115px;top:701px;width:98px;height:22px;border:1.5px solid #2f87a3;background:#fff"></div>
<div class="a td" style="left:1109px;width:100px;text-align:right;top:703px">0.00</div>
<div class="a" style="left:1214px;top:701px;width:72px;height:22px;border:1.5px solid #2f87a3;background:#fff"></div>
<div class="a td" style="left:1182px;width:100px;text-align:right;top:703px">2,506.81</div>
<div class="a td" style="left:33px;top:725px">Difference</div>
<div class="a td" style="left:653px;width:100px;text-align:right;top:725px">0.0000</div>
<div class="a td" style="left:739px;width:100px;text-align:right;top:725px">0.00</div>
<div class="a td" style="left:824px;width:100px;text-align:right;top:725px">0.00</div>
<div class="a td" style="left:905px;width:100px;text-align:right;top:725px">0.00</div>
<div class="a td" style="left:1011px;width:100px;text-align:right;top:725px">0.00</div>
<div class="a td" style="left:1110px;width:100px;text-align:right;top:725px">0.00</div>
<div class="a td" style="left:1183px;width:100px;text-align:right;top:725px">0.00</div>
<div class="a" style="left:28px;top:754px;font-size:10.62px;font-style:italic;color:#000;line-height:12px">Total Employees (by File#) in this batch:&nbsp; 61</div>
<div class="a" style="left:28px;top:791px;font-size:14.36px;color:#3a50b0;line-height:17px">Change Saving Options</div>
<div class="a btn" style="left:1486px;width:88px;border-color:#3a52a8"></div>
<div class="a btnt" style="left:1486px;width:88px;color:#2b3f91;padding-left:2px">CANCEL</div>
<div class="a btn" style="left:1583px;width:67px;border-color:#3a52a8"></div>
<div class="a btnt" style="left:1583px;width:67px;color:#2b3f91;padding-left:1px">SAVE</div>
<div class="a btn" style="left:1659px;width:133px;border-color:#c9c9c9"></div>
<div class="a btnt" style="left:1659px;width:133px;color:#b5b5b5;padding-left:2px">AUTO BALANCE</div>
<div class="a btn" style="left:1801px;width:72px;border-color:#3450a8;background:#3450a8"></div>
<div class="a btnt" style="left:1801px;width:72px;color:#fff">DONE</div>
<div class="a" style="left:1869px;top:814px;width:36px;height:128px;background:#4a6cc4;border-radius:0 0 0 7px"></div>
<svg class="a" style="left:1878px;top:823px" width="19" height="19" viewBox="0 0 19 19"><circle cx="9.5" cy="9.5" r="9" fill="#fff"/><path d="M6.6 7.3a2.9 2.9 0 1 1 4.2 2.6c-.9.5-1.3 1-1.3 2.1" fill="none" stroke="#4a6cc4" stroke-width="2.1"/><circle cx="9.5" cy="14.6" r="1.2" fill="#4a6cc4"/></svg>
<div class="a" style="left:1887px;top:889px;font-size:14.2px;font-weight:bold;color:#fff;line-height:16px;transform:translate(-50%,-50%) rotate(90deg);transform-origin:50% 50%">Need Help?</div>

<div id="scroll">
 <svg class="a" style="left:3px;top:4px" width="9" height="6" viewBox="0 0 9 6"><path d="M0 6L4.5 0L9 6z" fill="#8a8a8a"/></svg>
 <div class="a" style="left:3px;top:18px;width:9px;height:673px;border-radius:5px;background:#8d8d8d"></div>
 <svg class="a" style="left:3px;top:901px" width="9" height="6" viewBox="0 0 9 6"><path d="M0 0L4.5 6L9 0z" fill="#8a8a8a"/></svg>
</div>
<div id="task">
 <svg class="a" style="left:17px;top:13px" width="26" height="21" viewBox="0 0 26 21"><circle cx="17" cy="8" r="6" fill="#f59b1b"/><path d="M6 20h15a5 5 0 0 0 0-10 6.5 6.5 0 0 0-12.5 1A4.5 4.5 0 0 0 6 20z" fill="#b3cff7"/><path d="M6 20h15a5 5 0 0 0 1-9.9" fill="none" stroke="#8ab0ea" stroke-width="1"/></svg>
 <div class="a" style="left:31.5px;top:5.5px;width:16px;height:16px;border-radius:8px;background:#c42b1c;color:#fff;font-size:10.5px;text-align:center;line-height:16px">1</div>
 <div class="a" style="left:50px;top:9px;font-size:11.1px;color:#111;line-height:13px">35°F</div>
 <div class="a" style="left:50px;top:24px;font-size:12.4px;color:#5c5c5c;line-height:15px">Mostly cloudy</div>
 <svg class="a" style="left:573px;top:13px" width="23" height="23" viewBox="0 0 23 23"><defs><linearGradient id="wg" x1="0" y1="0" x2="1" y2="1"><stop offset="0" stop-color="#2cc4f5"/><stop offset="1" stop-color="#0a6fd6"/></linearGradient></defs><rect x="0" y="0" width="10.8" height="10.8" rx="1" fill="url(#wg)"/><rect x="12.2" y="0" width="10.8" height="10.8" rx="1" fill="url(#wg)"/><rect x="0" y="12.2" width="10.8" height="10.8" rx="1" fill="url(#wg)"/><rect x="12.2" y="12.2" width="10.8" height="10.8" rx="1" fill="url(#wg)"/></svg>
 <div class="a" style="left:610px;top:8px;width:219px;height:31px;border-radius:16px;background:#f8f8f8;border:1px solid #dcdcdc"></div>
 <svg class="a" style="left:620px;top:16px" width="16" height="16" viewBox="0 0 16 16"><circle cx="6.8" cy="6.8" r="5.3" fill="none" stroke="#1b1b1b" stroke-width="1.7"/><path d="M10.7 10.7L15 15" stroke="#1b1b1b" stroke-width="1.9"/></svg>
 <div class="a" style="left:646px;top:15px;font-size:13.6px;color:#636363;line-height:17px">Search</div>
 <svg class="a" style="left:840px;top:12.5px" width="26" height="23" viewBox="0 0 26 23"><rect x="9" y="0" width="16" height="16" fill="#f4f4f4" stroke="#e2e2e2"/><rect x="0" y="7" width="17" height="16" fill="#1c1c1c"/><rect x="5" y="7" width="12" height="10" fill="#b9b9b9"/></svg>
 <svg class="a" style="left:885px;top:11.5px" width="25" height="22" viewBox="0 0 25 22"><path d="M0 1.5a1.5 1.5 0 0 1 1.5-1.5H9l2 3h12.5A1.5 1.5 0 0 1 25 4.5V22H0z" fill="#f0b429"/><path d="M0 5h25v17H0z" fill="#fcd565"/><rect x="7" y="15" width="11" height="6" rx="1" fill="#1c7bd4"/></svg>
 <div class="a dot" style="left:893px"></div>
 <svg class="a" style="left:928px;top:11.5px" width="25" height="25" viewBox="0 0 25 25"><circle cx="13" cy="12" r="11" fill="#2a8ce0"/><path d="M24 12a11 11 0 0 0-21.5-3.5c3-3 10-3 12.5 2 1 2-1 3.5-3 3.5 2 3 8 3 12-2z" fill="#5ed36a"/><circle cx="15" cy="13" r="3" fill="#fff"/><rect x="1" y="14" width="11" height="9" rx="1" fill="#c1692b"/><rect x="5" y="12" width="3" height="2" fill="#c1692b"/><rect x="1" y="17" width="11" height="1" fill="#8a4414"/></svg>
 <div class="a dot" style="left:937px"></div>
 <div class="a" style="left:965px;top:4px;width:40px;height:39px;border-radius:4px;background:#ecbaba"></div>
 <div class="a" style="left:969px;top:40px;width:32px;height:2px;border-radius:1px;background:#c42b1c"></div>
 <svg class="a" style="left:972px;top:13.5px" width="25" height="22" viewBox="0 0 25 22"><circle cx="11" cy="3" r="3" fill="#7b83eb"/><rect x="6" y="7" width="16" height="14" rx="4" fill="#5059c9"/><rect x="0" y="9" width="12" height="11" rx="1.5" fill="#464eb8"/><text x="6" y="18" font-size="9" font-weight="bold" fill="#fff" text-anchor="middle" font-family="Liberation Sans">T</text></svg>
 <div class="a" style="left:986px;top:6px;width:17px;height:17px;border-radius:9px;background:#c42b1c;color:#fff;font-size:11px;text-align:center;line-height:17px">1</div>
 <svg class="a" style="left:1018px;top:11.5px" width="24" height="24" viewBox="0 0 24 24"><path d="M1 2l16-1v13L2 15z" fill="#1e5fd0"/><path d="M3 4l12-.5V12L3.5 12.5z" fill="#8fc3ff"/><path d="M6 16h8l1 3H5z" fill="#bbb"/><circle cx="17.5" cy="17.5" r="5.5" fill="#ddd" stroke="#888"/><path d="M15 17l2 2 3-4" fill="none" stroke="#3a8a3a" stroke-width="1.3"/></svg>
 <svg class="a" style="left:1061px;top:11.5px" width="24" height="24" viewBox="0 0 24 24"><circle cx="12" cy="12" r="10.5" fill="none" stroke="#1565c0" stroke-width="2.2"/><path d="M17 8.5a6 6 0 1 0 0 7" fill="none" stroke="#1565c0" stroke-width="3"/><path d="M12 12h8" stroke="#1565c0" stroke-width="2.5"/></svg>
 <div class="a" style="left:1098px;top:5px;width:34px;height:38px;border-radius:4px;background:#f7f7f7;border-right:1px solid #e0e0e0"></div>
 <div class="a" style="left:1132px;top:6px;width:4px;height:36px;border-radius:0 3px 3px 0;background:#f3f3f3;border-right:1px solid #dedede"></div>
 <svg class="a" style="left:1104px;top:9.5px" width="25" height="25" viewBox="0 0 24 24"><circle cx="12" cy="12" r="11" fill="#db4437"/><path d="M12 12L21.5 6.5A11 11 0 0 1 12 23z" fill="#f4c20d"/><path d="M12 12L12 23A11 11 0 0 1 2.5 6.5z" fill="#0f9d58"/><circle cx="12" cy="12" r="5" fill="#fff"/><circle cx="12" cy="12" r="3.9" fill="#4285f4"/></svg>
 <div class="a" style="left:1109px;top:40px;width:16px;height:3px;border-radius:2px;background:#0067c0"></div>
 <svg class="a" style="left:1149px;top:11.5px" width="26" height="24" viewBox="0 0 26 24"><path d="M8 8l12-6 4 4v14l-16 3z" fill="#1e90e8"/><path d="M12 12l12-6v14H12z" fill="#50b8ff"/><rect x="0" y="11" width="11" height="11" rx="1.5" fill="#0a64c8"/><circle cx="5.5" cy="16.5" r="3" fill="none" stroke="#fff" stroke-width="1.8"/></svg>
 <div class="a dot" style="left:1158px"></div>
 <div class="a" style="left:1162px;top:4px;width:16px;height:16px;border-radius:8px;background:#5bc7f5"></div>
 <svg class="a" style="left:1165px;top:6.5px" width="10" height="8" viewBox="0 0 10 8"><rect x="0.7" y="0.7" width="8.6" height="6.6" fill="none" stroke="#111" stroke-width="1.2"/><path d="M0.7 0.7l4.3 3.5 4.3-3.5" fill="none" stroke="#111" stroke-width="1.1"/></svg>
 <svg class="a" style="left:1193px;top:12.5px" width="22" height="23" viewBox="0 0 22 23"><rect x="4" y="0" width="18" height="23" rx="2" fill="#c85ad6"/><rect x="12" y="6" width="10" height="17" fill="#9a3ab0"/><rect x="0" y="11" width="11" height="11" rx="1.5" fill="#7719aa"/><text x="5.5" y="20" font-size="9" font-weight="bold" fill="#fff" text-anchor="middle" font-family="Liberation Sans">N</text></svg>
 <div class="a dot" style="left:1201px"></div>
 <svg class="a" style="left:1239px;top:12.5px" width="21" height="22" viewBox="0 0 21 22"><rect x="0" y="0" width="21" height="22" rx="5" fill="#3d1aa0"/><text x="10.5" y="16" font-size="13" font-weight="bold" fill="#fff" text-anchor="middle" font-family="Liberation Sans">Q</text></svg>
 <div class="a dot" style="left:1245px"></div>
 <svg class="a" style="left:1280px;top:11.5px" width="22" height="23" viewBox="0 0 22 23"><rect x="3" y="0" width="19" height="23" rx="2" fill="#21a366"/><rect x="12" y="0" width="10" height="8" fill="#33c481"/><rect x="12" y="15" width="10" height="8" fill="#107c41"/><rect x="0" y="10" width="11" height="11" rx="1.5" fill="#185c37"/><text x="5.5" y="19" font-size="9" font-weight="bold" fill="#fff" text-anchor="middle" font-family="Liberation Sans">X</text></svg>
 <div class="a dot" style="left:1288px"></div>
 <svg class="a" style="left:1328px;top:11.5px" width="19" height="24" viewBox="0 0 19 24"><rect x="0" y="0" width="19" height="24" rx="2" fill="#5a6b7a"/><rect x="2" y="2" width="15" height="4" fill="#7fd0f5"/><g fill="#c9d3da"><rect x="2" y="8" width="4" height="4"/><rect x="7.5" y="8" width="4" height="4"/><rect x="13" y="8" width="4" height="4"/><rect x="2" y="13.5" width="4" height="4"/><rect x="7.5" y="13.5" width="4" height="4"/><rect x="2" y="19" width="4" height="3.5"/><rect x="7.5" y="19" width="4" height="3.5"/></g><rect x="13" y="13.5" width="4" height="9" fill="#2a7fd6"/></svg>
 <div class="a dot" style="left:1333px"></div>
 <svg class="a" style="left:1699px;top:21px" width="12" height="7" viewBox="0 0 12 7"><path d="M1 6L6 1L11 6" fill="none" stroke="#222" stroke-width="1.3"/></svg>
 <svg class="a" style="left:1731px;top:15px" width="12" height="17" viewBox="0 0 12 17"><rect x="3.5" y="0.8" width="5" height="9.5" rx="2.5" fill="none" stroke="#2f5fc0" stroke-width="1.4"/><path d="M1 7.5a5 5 0 0 0 10 0M6 12.5V16.5" fill="none" stroke="#2f5fc0" stroke-width="1.4"/></svg>
 <svg class="a" style="left:1760px;top:16px" width="17" height="13" viewBox="0 0 17 13"><path d="M1 5a10.5 10.5 0 0 1 15 0M3.5 7.7a7 7 0 0 1 10 0M6 10.2a3.5 3.5 0 0 1 5 0" fill="none" stroke="#222" stroke-width="1.3"/><circle cx="8.5" cy="12" r="1" fill="#222"/></svg>
 <svg class="a" style="left:1785px;top:15px" width="17" height="15" viewBox="0 0 17 15"><path d="M1 5h3l4.5-4v13L4 10H1z" fill="none" stroke="#222" stroke-width="1.2"/><path d="M11 4.5a4 4 0 0 1 0 6M13 2.5a7 7 0 0 1 0 10" fill="none" stroke="#222" stroke-width="1.2"/></svg>
 <svg class="a" style="left:1809px;top:15px" width="21" height="14" viewBox="0 0 21 14"><rect x="0.7" y="3.5" width="17.5" height="9.5" rx="2" fill="#1e8a1e" stroke="#222" stroke-width="1.2"/><rect x="18.5" y="6.5" width="2" height="3.5" fill="#222"/><path d="M10 0L7.5 6h3l-1.5 4" fill="none" stroke="#222" stroke-width="1.3"/></svg>
 <div class="a" style="left:1840px;top:9px;width:60px;text-align:right;font-size:11.9px;color:#111;line-height:14px">11:19 AM</div>
 <div class="a" style="left:1840px;top:25px;width:60px;text-align:right;font-size:12.1px;color:#111;line-height:14px">3/24/2026</div>
</div>

</body></html>
